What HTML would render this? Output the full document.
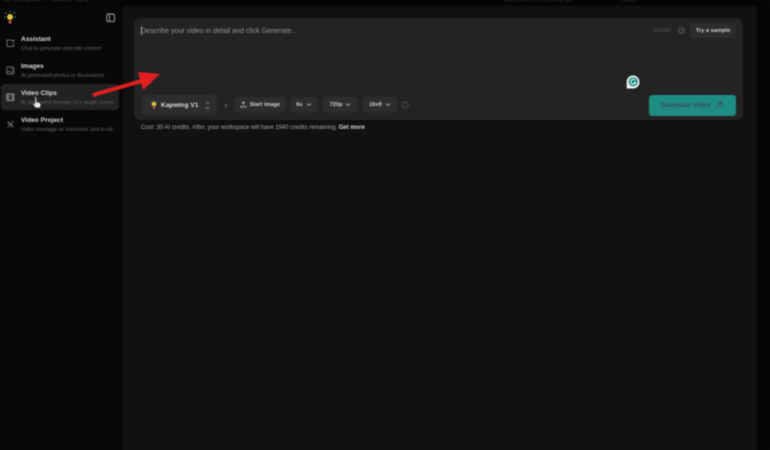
<!DOCTYPE html>
<html lang="en">
<head>
<meta charset="utf-8">
<title>Video Clips</title>
<style>
*{box-sizing:border-box;margin:0;padding:0}
html,body{width:770px;height:450px;overflow:hidden;background:#0d0d0d}
body{font-family:"Liberation Sans",sans-serif;position:relative;color:#ddd}
#stage{position:absolute;left:0;top:0;width:770px;height:450px;filter:blur(.45px);overflow:hidden}
.a{position:absolute;white-space:nowrap}
.top{left:0;top:0;width:770px;height:6px;background:#050505}
.side{left:0;top:6px;width:123px;height:444px;background:#080808}
.main{left:123px;top:6px;width:634px;height:444px;background:#111}
.right{left:757px;top:0;width:13px;height:450px;background:#050505}
.panel{left:134px;top:18px;width:609px;height:102px;background:#232323;border-radius:7px}
.active{left:1px;top:84px;width:118px;height:26px;background:#222;border-radius:4px}
.t{font-size:6.6px;font-weight:bold;color:#d8d8d8;left:21px}
.s{font-size:5.4px;color:#666;left:21px}
.pill{background:#2d2d2d;border-radius:3px;height:15px;top:97px;font-size:5.6px;line-height:15px;font-weight:bold;color:#d0d0d0;display:flex;align-items:center;justify-content:center;gap:3px}
.pill span{position:relative;top:.5px}
.pill svg{position:relative;top:-.5px}
.ic{position:absolute;overflow:visible;fill:none}
</style>
</head>
<body>
<div id="stage">
<div class="a top"></div>
<div class="a side"></div>
<div class="a main"></div>
<div class="a right"></div>

<div class="a" style="left:4px;top:-3px;font-size:5.5px;color:#555">My Workspace &nbsp;&nbsp;/&nbsp;&nbsp; Untitled Project</div>
<div class="a" style="left:505px;top:-3px;font-size:5px;color:#444">Last saved a few seconds ago</div>
<div class="a" style="left:622px;top:-3px;font-size:5.5px;color:#444">Share</div>

<svg class="ic" style="left:4px;top:11px" width="12" height="14" viewBox="0 0 12 14">
<circle cx="6" cy="6" r="3" fill="#e0c23c"/>
<path d="M6 1.500V.3M2.300 2.600 1.200 1.500M9.700 2.600l1.100-1.100M1.500 6H.2M10.500 6h1.300" stroke="#39a99a" stroke-width="1.100"/>
<path d="M4.500 9.500h3l-.4 3H4.900z" fill="#d84d64"/>
</svg>
<svg class="ic" style="left:106px;top:13px" width="10" height="10" viewBox="0 0 10 10">
<rect x=".8" y="1" width="7.600" height="7.600" rx="1.400" stroke="#aaa" stroke-width=".9"/>
<path d="M3.500 1v7.600" stroke="#aaa" stroke-width=".9"/>
</svg>

<div class="a active"></div>

<svg class="ic" style="left:6px;top:39px" width="9" height="9" viewBox="0 0 9 9"><path d="M5.500 1H1v6.500h6.500V4M7 .5v2.500M5.800 1.700h2.400" stroke="#888" stroke-width=".8"/></svg>
<div class="a t" style="top:36px">Assistant</div>
<div class="a s" style="top:45.500px">Chat to generate and edit content</div>

<svg class="ic" style="left:6px;top:66px" width="9" height="9" viewBox="0 0 9 9"><rect x=".8" y="1" width="7" height="7" rx="1" stroke="#888" stroke-width=".8"/><path d="M1 6.500l2-1.500 2 1.500 3-1" stroke="#888" stroke-width=".7"/><circle cx="5.800" cy="3" r=".7" fill="#888"/></svg>
<div class="a t" style="top:63px">Images</div>
<div class="a s" style="top:72.500px">AI generated photos or illustrations</div>

<svg class="ic" style="left:6px;top:93px" width="9" height="9" viewBox="0 0 9 9"><rect x=".8" y="1" width="7" height="6.500" stroke="#aaa" stroke-width=".8"/><path d="M2.800 1v6.500M6 1v6.500M1 3h1.800M1 5.300h1.800M6 3h1.800M6 5.300h1.800" stroke="#aaa" stroke-width=".6"/></svg>
<div class="a t" style="top:90px">Video Clips</div>
<div class="a s" style="top:99.500px;color:#5f5f5f">AI generated footage of a single scene</div>

<svg class="ic" style="left:6px;top:119px" width="9" height="10" viewBox="0 0 9 10"><path d="M1.500 8.500 7.500 2M2 2.500l5 5.500M2.500 5h4M1.500 3.500h2M5 7.500h2.500" stroke="#7c7c7c" stroke-width=".8"/></svg>
<div class="a t" style="top:117px">Video Project</div>
<div class="a s" style="top:126.500px">Video montage w/ voiceover and b-roll</div>

<div class="a panel"></div>
<div class="a" style="left:141px;top:26px;width:.8px;height:9px;background:#aaa"></div>
<div class="a" style="left:141px;top:26.500px;font-size:7.100px;color:#959595">Describe your video in detail and click Generate...</div>
<div class="a" style="left:654px;top:27.500px;font-size:5.500px;color:#5c5c5c">0/2000</div>
<svg class="ic" style="left:677px;top:26px" width="9" height="9" viewBox="0 0 9 9"><circle cx="4.500" cy="4.500" r="2.800" stroke="#777" stroke-width=".7"/><path d="M4.500 3v1.700l1 .5" stroke="#777" stroke-width=".6"/></svg>
<div class="a" style="left:690px;top:23px;width:46px;height:15px;background:#2d2d2d;border-radius:3px;font-size:5.700px;font-weight:bold;color:#cfcfcf;text-align:center;line-height:16px">Try a sample</div>

<svg class="ic" style="left:626px;top:75px" width="14" height="14" viewBox="0 0 14 14">
<path d="M7 .5a6.500 6.500 0 0 1 6.500 6.500 6.500 6.500 0 0 1-6.500 6.500H.7V7A6.300 6.300 0 0 1 7 .5z" fill="#f2f2f2"/>
<circle cx="7.200" cy="6.800" r="4.600" fill="#0f8c78"/>
<path d="M9.300 5.500A2.500 2.500 0 1 0 9.600 7.500H7.500" stroke="#f2f2f2" stroke-width="1.100"/>
</svg>

<div class="a" style="left:141px;top:95px;width:76px;height:20px;background:#2d2d2d;border-radius:4px"></div>
<svg class="ic" style="left:150px;top:100px" width="8" height="10" viewBox="0 0 8 10"><circle cx="4" cy="4" r="2.400" fill="#d9bd3c"/><path d="M3 7h2l-.2 2H3.200z" fill="#d84d64"/><path d="M4 .8V0M1 1.500l-.6-.6M7 1.500l.6-.6" stroke="#3aa797" stroke-width=".7"/></svg>
<div class="a" style="left:161px;top:101.500px;font-size:6.600px;font-weight:bold;color:#ddd">Kapwing V1</div>
<svg class="ic" style="left:204px;top:101px" width="7" height="9" viewBox="0 0 7 9"><path d="M1.800 3 3.500 1.300 5.200 3M1.800 6 3.500 7.700 5.200 6" stroke="#888" stroke-width=".8"/></svg>
<svg class="ic" style="left:223px;top:102px" width="6" height="7" viewBox="0 0 6 7"><path d="M2 1.800 3.800 3.500 2 5.200" stroke="#888" stroke-width=".7"/></svg>

<div class="a pill" style="left:234px;width:52px"><svg width="7" height="7" viewBox="0 0 7 7" style="fill:none"><path d="M3.500 5V1M2 2.300 3.500 .8 5 2.300M.8 4.500v1.700h5.400V4.500" stroke="#ccc" stroke-width=".7"/></svg><span>Start image</span></div>
<div class="a pill" style="left:290px;width:28px"><span>6s</span><svg width="6" height="5" viewBox="0 0 6 5" style="fill:none"><path d="M1 1.500l2 2 2-2" stroke="#bbb" stroke-width=".8"/></svg></div>
<div class="a pill" style="left:323px;width:35px"><span>720p</span><svg width="6" height="5" viewBox="0 0 6 5" style="fill:none"><path d="M1 1.500l2 2 2-2" stroke="#bbb" stroke-width=".8"/></svg></div>
<div class="a pill" style="left:363px;width:34px"><span>16x9</span><svg width="6" height="5" viewBox="0 0 6 5" style="fill:none"><path d="M1 1.500l2 2 2-2" stroke="#bbb" stroke-width=".8"/></svg></div>
<svg class="ic" style="left:401px;top:101px" width="8" height="8" viewBox="0 0 8 8"><circle cx="4" cy="4" r="3.200" stroke="#555" stroke-width=".8"/><path d="M4 3.500v2M4 2.200v.6" stroke="#555" stroke-width=".7"/></svg>

<div class="a" style="left:649px;top:95px;width:87px;height:20.500px;background:#1f8c82;border-radius:3px"></div>
<div class="a" style="left:661px;top:101.500px;font-size:6.600px;font-weight:bold;color:#3a4750;letter-spacing:.1px">Generate Video</div>
<svg class="ic" style="left:715px;top:100px" width="9" height="9" viewBox="0 0 9 9"><path d="M1 8 5.500 3.500M5.500 1l.5 1.500L7.500 3 6 3.600 5.500 5 5 3.600 3.500 3 5 2.500z" stroke="#40545c" stroke-width=".8"/></svg>

<div class="a" style="left:141px;top:125px;font-size:5.950px;color:#a5a5a5">Cost: 30 AI credits. After, your workspace will have 1940 credits remaining. <b style="color:#d5d5d5">Get more</b></div>

<svg class="ic" style="left:0;top:0" width="770" height="450" viewBox="0 0 770 450">
<path d="M93 95 145 80" stroke="#e21f1f" stroke-width="3.800"/>
<path d="M160 74 138 72 143 90z" fill="#e21f1f"/>
</svg>

<svg class="ic" style="left:32px;top:96px" width="10" height="14" viewBox="0 0 10 14">
<path d="M3 1.500c0-1 1.500-1 1.500 0V6l3 .8c1 .3 1.300 1 1.200 2l-.5 3H3.700L1 8.500c-.5-1 .6-1.500 1.400-.8l.6.6z" fill="#eee" stroke="#222" stroke-width=".5"/>
</svg>
</div>
</body>
</html>
